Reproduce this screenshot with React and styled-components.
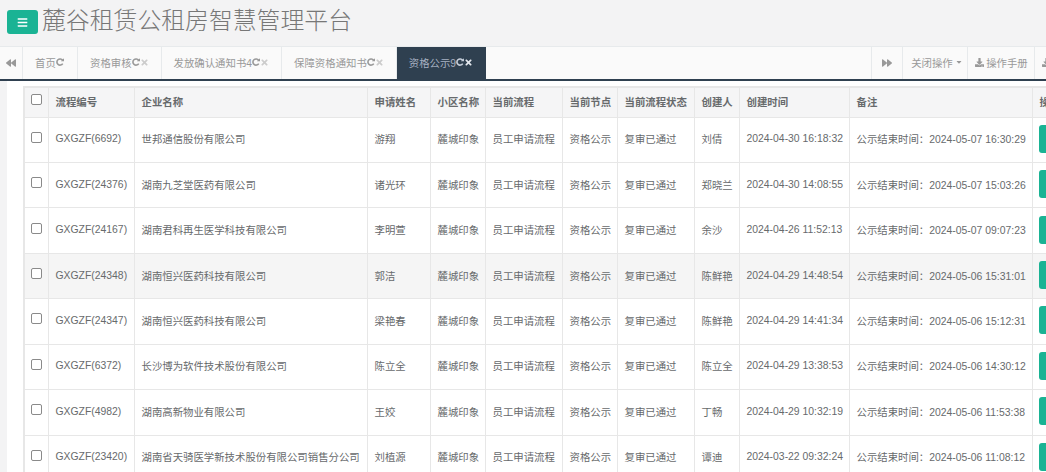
import React from 'react';
import styled, { createGlobalStyle } from 'styled-components';
import { FaBars, FaBackward, FaForward, FaTimes, FaDownload, FaCaretDown } from 'react-icons/fa';

const Global = createGlobalStyle`
  html, body { margin: 0; padding: 0; height: 100%; overflow: hidden; background: #f3f3f4; }
  body { font-family: "Liberation Sans", "Noto Sans CJK SC", sans-serif; color: #676a6c; font-size: 10.4px; }
`;
const Page = styled.div`width: 1046px; height: 472px; overflow: hidden; display: flex; flex-direction: column;`;
const Header = styled.header`height: 46px; display: flex; align-items: flex-start; padding: 10px 0 0 7px; box-sizing: border-box; flex: none;`;
const MenuButton = styled.button`width: 31px; height: 24px; border: 0; border-radius: 3px; background: #1ab394; color: #fff; display: flex; align-items: center; justify-content: center; font-size: 11px; padding: 0;`;
const Title = styled.h1`margin: -7px 0 0 4px; font-size: 23.85px; line-height: 32px; font-weight: 300; color: #777; font-family: "Noto Sans CJK SC", sans-serif; white-space: nowrap;`;
const TabBar = styled.nav`height: 32px; flex: none; display: flex; background: #fafafa; border-top: 1px solid #e7eaec; border-bottom: 2px solid #2f4050; overflow: hidden;`;
const Arrow = styled.div`width: 22px; flex: none; display: flex; align-items: center; justify-content: center; color: #999; font-size: 10px; border-right: 1px solid #e7eaec;`;
const Tab = styled.div`display: flex; align-items: center; white-space: nowrap; padding: 0 12px 2px; width: ${p => (p.$home ? '30px' : 'auto')}; color: ${p => (p.$active ? '#a7b1c2' : '#999')}; background: ${p => (p.$active ? '#2f4050' : 'transparent')}; border-right: 1px solid ${p => (p.$active ? '#2f4050' : '#e7eaec')}; flex: none;`;
const RefreshSvg = styled.svg`width: 8px; height: 8px; flex: none; color: ${p => (p.$active ? '#c8d0dc' : '#999')};`;
const TabClose = styled(FaTimes)`font-size: 9px; margin-left: 0; color: ${p => (p.$active ? '#e4e8ee' : '#ccc')};`;
const Spacer = styled.div`flex: none; width: 385px;`;
const RightArrow = styled(Arrow)`width: 30px; border-left: 1px solid #e7eaec;`;
const Tool = styled.div`display: flex; align-items: center; gap: 2px; width: ${p => p.$w}px; box-sizing: border-box; padding: 0 0 2px ${p => p.$pad}px; color: #999; white-space: nowrap; border-right: 1px solid #e7eaec; flex: none;`;
const Body = styled.main`flex: 1; min-height: 0; background: #fff; margin-left: 7px; padding: 5px 0 0 16px; overflow: hidden;`;
const Table = styled.table`border-collapse: collapse; table-layout: fixed; width: 1040px; background: #fff; border: 2px solid #e7e7e7;`;
const Th = styled.th`height: 30px; box-sizing: border-box; padding: 0 6px 2px 7px; text-align: left; background: #f5f5f6; border: 1px solid #e7e7e7; font-weight: 700; font-size: 10.4px; color: #676a6c; white-space: nowrap; overflow: hidden;`;
const Td = styled.td`height: 45.45px; box-sizing: border-box; padding: 0 6px 2px 7px; border: 1px solid #e7e7e7; font-size: 10.4px; color: #676a6c; white-space: nowrap; overflow: hidden;`;
const Tr = styled.tr`background: ${p => (p.$hl ? '#f5f5f5' : '#fff')};`;
const Check = styled.span`display: block; width: 9px; height: 9px; border: 1px solid #8a8a8a; border-radius: 2px; background: #fff; margin: -3px 0 0 -1px;`;
const ActionBtn = styled.span`display: block; width: 20px; height: 28px; background: #1ab394; border-radius: 3px; margin-left: -1px;`;

const Refresh = ({ active }) => (
  <RefreshSvg $active={active} viewBox="0 0 8 8" aria-hidden="true">
    <path d="M6.6 2.3A3.1 3.1 0 1 0 6.7 5.6" fill="none" stroke="currentColor" strokeWidth="1.6" />
    <path d="M4.9 3.2 L8 3.2 L8 0.2Z" fill="currentColor" />
  </RefreshSvg>
);

const widths = [24, 86, 233, 63, 55, 77, 55, 77, 45, 110, 183, 40];
const heads = ['', '流程编号', '企业名称', '申请姓名', '小区名称', '当前流程', '当前节点', '当前流程状态', '创建人', '创建时间', '备注', '操作'];
const rows = [
  ['GXGZF(6692)', '世邦通信股份有限公司', '游翔', '刘倩', '2024-04-30 16:18:32', '2024-05-07 16:30:29'],
  ['GXGZF(24376)', '湖南九芝堂医药有限公司', '诸光环', '郑晓兰', '2024-04-30 14:08:55', '2024-05-07 15:03:26'],
  ['GXGZF(24167)', '湖南君科再生医学科技有限公司', '李明萱', '余沙', '2024-04-26 11:52:13', '2024-05-07 09:07:23'],
  ['GXGZF(24348)', '湖南恒兴医药科技有限公司', '郭洁', '陈鲜艳', '2024-04-29 14:48:54', '2024-05-06 15:31:01'],
  ['GXGZF(24347)', '湖南恒兴医药科技有限公司', '梁艳春', '陈鲜艳', '2024-04-29 14:41:34', '2024-05-06 15:12:31'],
  ['GXGZF(6372)', '长沙博为软件技术股份有限公司', '陈立全', '陈立全', '2024-04-29 13:38:53', '2024-05-06 14:30:12'],
  ['GXGZF(4982)', '湖南高新物业有限公司', '王姣', '丁畅', '2024-04-29 10:32:19', '2024-05-06 11:53:38'],
  ['GXGZF(23420)', '湖南省天骑医学新技术股份有限公司销售分公司', '刘植源', '谭迪', '2024-03-22 09:32:24', '2024-05-06 11:08:12'],
];
const tabs = [
  { t: '首页', close: false, home: true },
  { t: '资格审核', close: true },
  { t: '发放确认通知书4', close: true },
  { t: '保障资格通知书', close: true },
  { t: '资格公示9', close: true, active: true },
];

export default function App() {
  return (
    <Page>
      <Global />
      <Header>
        <MenuButton aria-label="menu"><FaBars /></MenuButton>
        <Title>麓谷租赁公租房智慧管理平台</Title>
      </Header>
      <TabBar>
        <Arrow><FaBackward /></Arrow>
        {tabs.map(x => (
          <Tab key={x.t} $active={x.active} $home={x.home}>
            {x.t}<Refresh active={x.active} />
            {x.close && <TabClose $active={x.active} />}
          </Tab>
        ))}
        <Spacer />
        <RightArrow><FaForward /></RightArrow>
        <Tool $w={65} $pad={8}>关闭操作<FaCaretDown size={8} /></Tool>
        <Tool $w={67} $pad={7}><FaDownload size={9} />操作手册</Tool>
        <Tool $w={40} $pad={7}><FaDownload size={9} /></Tool>
      </TabBar>
      <Body>
        <Table>
          <colgroup>{widths.map((w, i) => <col key={i} style={{ width: w }} />)}</colgroup>
          <thead>
            <tr>{heads.map((h, i) => <Th key={i}>{i === 0 ? <Check /> : h}</Th>)}</tr>
          </thead>
          <tbody>
            {rows.map((r, i) => (
              <Tr key={r[0]} $hl={i === 3}>
                <Td><Check /></Td>
                <Td>{r[0]}</Td>
                <Td>{r[1]}</Td>
                <Td>{r[2]}</Td>
                <Td>麓城印象</Td>
                <Td>员工申请流程</Td>
                <Td>资格公示</Td>
                <Td>复审已通过</Td>
                <Td>{r[3]}</Td>
                <Td>{r[4]}</Td>
                <Td>公示结束时间：{r[5]}</Td>
                <Td><ActionBtn /></Td>
              </Tr>
            ))}
          </tbody>
        </Table>
      </Body>
    </Page>
  );
}
